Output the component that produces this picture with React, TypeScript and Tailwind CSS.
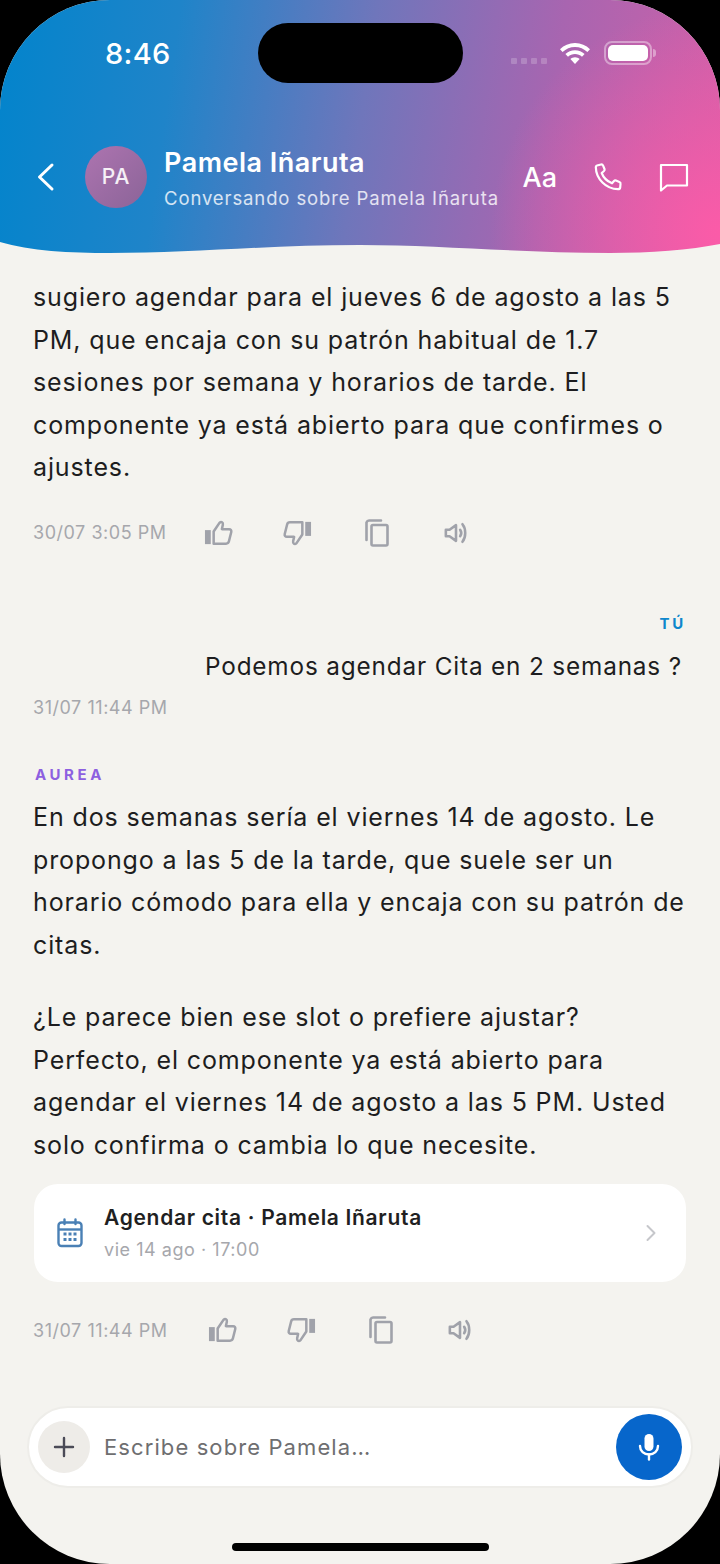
const iconColor = '#a0a2aa';

function ThumbUp() {
  return (
    <svg width="29" height="28" viewBox="0 0 30 28" fill="none" stroke={iconColor} strokeWidth="2.6" strokeLinejoin="round">
      <rect x="1" y="11" width="6" height="14.5" fill={iconColor} stroke="none" />
      <path d="M10 25V12.5L16 3.5C18 1.5 20 3 19.5 5.5L18.5 10H26C27.6 10 28.6 11.4 28.2 13L25.8 22.6C25.4 24.2 24.3 25 22.8 25Z" />
    </svg>
  );
}

function ThumbDown() {
  return (
    <svg width="29" height="28" viewBox="0 0 30 28" fill="none" stroke={iconColor} strokeWidth="2.6" strokeLinejoin="round" className="rotate-180">
      <rect x="1" y="11" width="6" height="14.5" fill={iconColor} stroke="none" />
      <path d="M10 25V12.5L16 3.5C18 1.5 20 3 19.5 5.5L18.5 10H26C27.6 10 28.6 11.4 28.2 13L25.8 22.6C25.4 24.2 24.3 25 22.8 25Z" />
    </svg>
  );
}

function Copy() {
  return (
    <svg width="26" height="28" viewBox="0 0 26 28" fill="none" stroke={iconColor} strokeWidth="2.6" strokeLinejoin="round">
      <path d="M2.5 21V3.5C3 2.2 3.5 1.5 5 1.5H17" strokeLinecap="round" />
      <rect x="7.5" y="6" width="16" height="20.5" rx="1.5" />
    </svg>
  );
}

function Speaker() {
  return (
    <svg width="24" height="24" viewBox="0 0 26 26" fill="none" stroke={iconColor} strokeWidth="2.8" strokeLinecap="round" strokeLinejoin="round">
      <path d="M2 9.5H6L13 4.5V21.5L6 16.5H2Z" />
      <path d="M17.5 9.5C18.9 11.5 18.9 14.5 17.5 16.5" />
      <path d="M20 3.5C24 8.5 24 17.5 20 22.5" />
    </svg>
  );
}

function MessageActions({ time, gap }: { time: string; gap: string }) {
  return (
    <div className="flex items-center h-[30px]">
      <span className={`text-[18px] tracking-[0.03em] text-[#a6a7ac] ${gap}`}>{time}</span>
      <div className="w-[30px] flex justify-center"><ThumbUp /></div>
      <div className="w-[30px] flex justify-center ml-[49px]"><ThumbDown /></div>
      <div className="w-[30px] flex justify-center ml-[49px]"><Copy /></div>
      <div className="w-[30px] flex justify-center ml-[49px]"><Speaker /></div>
    </div>
  );
}

function Paragraph({ children }: { children: React.ReactNode }) {
  return <p className="text-[25px] leading-[42.5px] tracking-[0.035em] text-[#1d1d20]">{children}</p>;
}

export default function App() {
  return (
    <div className="w-[720px] h-[1564px] bg-black font-['Inter',sans-serif]">
      <div className="relative w-full h-full rounded-[110px] overflow-hidden bg-[#f4f3ef] flex flex-col">
        {/* Header */}
        <header className="relative shrink-0 h-[253px] bg-[radial-gradient(circle_at_100%_92%,#fb5ba8_0px,rgba(251,91,168,0)_230px),linear-gradient(98deg,#0284cc_0%,#1f84c9_24%,#6f76bb_50%,#a865b0_75%,#d060a8_100%)] text-white">
          <div className="absolute left-[258px] top-[23px] w-[205px] h-[60px] rounded-full bg-black" />

          <div className="flex items-center h-[106px] pl-[105px] pr-[64px] justify-between">
            <span className="text-[29px] font-medium leading-none tracking-[0.01em]">8:46</span>
            <div className="flex items-center">
              <div className="flex gap-[4px] mr-[12px] mt-[15px]">
                <span className="w-[6px] h-[6px] rounded-[1px] bg-white/20" />
                <span className="w-[6px] h-[6px] rounded-[1px] bg-white/20" />
                <span className="w-[6px] h-[6px] rounded-[1px] bg-white/20" />
                <span className="w-[6px] h-[6px] rounded-[1px] bg-white/20" />
              </div>
              <svg width="32" height="24" viewBox="0 0 32 24" fill="white" className="mr-[13px]">
                <path d="M16 2C10 2 5 4.3 1 8.2L3.6 11C7 7.8 11.2 5.9 16 5.9S25 7.8 28.4 11L31 8.2C27 4.3 22 2 16 2Z" />
                <path d="M16 9.2C12.2 9.2 9 10.6 6.4 13L9 15.8C11 14 13.4 13 16 13S21 14 23 15.8L25.6 13C23 10.6 19.8 9.2 16 9.2Z" />
                <path d="M16 16.2C14.2 16.2 12.6 16.9 11.4 18L16 23L20.6 18C19.4 16.9 17.8 16.2 16 16.2Z" />
              </svg>
              <div className="flex items-center">
                <div className="w-[48px] h-[24px] rounded-[8px] border-2 border-white/40 p-[2px]">
                  <div className="w-full h-full rounded-[5px] bg-white" />
                </div>
                <div className="w-[3px] h-[8px] ml-[1px] rounded-r-full bg-white/40" />
              </div>
            </div>
          </div>

          <div className="flex items-center h-[62px] mt-[40px] pl-[36px] pr-[31px]">
            <svg width="20" height="30" viewBox="0 0 20 30" fill="none" stroke="white" strokeWidth="3" strokeLinecap="round" strokeLinejoin="round">
              <path d="M16 3L3.5 15L16 27" />
            </svg>
            <div className="w-[62px] h-[62px] ml-[29px] rounded-full bg-[linear-gradient(135deg,#ad74b0,#8b6498)] flex items-center justify-center text-[21px] font-medium tracking-[0.04em] text-white/90">PA</div>
            <div className="ml-[17px] flex-1 pt-[3px]">
              <div className="text-[27px] leading-[32px] font-semibold tracking-[0.018em]">Pamela Iñaruta</div>
              <div className="text-[18.5px] leading-[26px] tracking-[0.048em] text-white/80 mt-[6px]">Conversando sobre Pamela Iñaruta</div>
            </div>
            <span className="text-[27px] font-medium leading-none">Aa</span>
            <svg width="30" height="30" viewBox="0 0 30 30" fill="none" stroke="white" strokeWidth="2.2" strokeLinecap="round" strokeLinejoin="round" className="ml-[36px]">
              <path d="M4 3.5L8 2.5C9 2.3 9.7 2.7 10.1 3.6L11.5 7C11.8 7.8 11.6 8.5 11 9L8.7 11C10.3 15.3 14.4 19.4 19 21.3L21 19C21.5 18.4 22.3 18.2 23 18.5L26.4 19.9C27.3 20.3 27.7 21 27.5 22L27.2 25.5C27 26.7 26.2 27.2 25 27.2C13 27 3 17 2.8 5C2.8 4.2 3.2 3.7 4 3.5Z" />
            </svg>
            <svg width="30" height="30" viewBox="0 0 30 30" fill="none" stroke="white" strokeWidth="2.2" strokeLinejoin="round" className="ml-[36px]">
              <path d="M2 3H28V23.5H8L2 28.5Z" />
            </svg>
          </div>

          {/* Wave edge */}
          <svg width="720" height="30" viewBox="0 0 720 30" className="absolute left-0 bottom-0">
            <path d="M0 19C30 28 70 30 110 30C190 30 270 22 360 22C440 22 520 30 610 30C650 30 690 27 720 21V30H0Z" fill="#f4f3ef" />
          </svg>
        </header>

        {/* Messages */}
        <main className="flex-1 px-[33px] pt-[23px]">
          <Paragraph>
            sugiero agendar para el jueves 6 de agosto a las 5 PM, que encaja con su patrón habitual de 1.7 sesiones por semana y horarios de tarde. El componente ya está abierto para que confirmes o ajustes.
          </Paragraph>
          <div className="mt-[29px]">
            <MessageActions time="30/07 3:05 PM" gap="mr-[37px]" />
          </div>

          <div className="mt-[66px] text-right pr-[1px] text-[15px] leading-[20px] font-bold tracking-[0.18em] text-[#0e87cc]">TÚ</div>
          <div className="mt-[11px] text-right pr-[5px] text-[24.3px] leading-[42.5px] tracking-[0.035em] text-[#1d1d20]">
            Podemos agendar Cita en 2 semanas ?
          </div>
          <div className="mt-[8px] text-[18px] leading-[26px] tracking-[0.03em] text-[#a6a7ac]">31/07 11:44 PM</div>

          <div className="mt-[44px] pl-[2px] text-[15px] leading-[20px] font-bold tracking-[0.24em] text-[#8d5fe0]">AUREA</div>
          <div className="mt-[11px]">
            <Paragraph>
              En dos semanas sería el viernes 14 de agosto. Le propongo a las 5 de la tarde, que suele ser un horario cómodo para ella y encaja con su patrón de citas.
            </Paragraph>
          </div>
          <div className="mt-[30px]">
            <Paragraph>
              ¿Le parece bien ese slot o prefiere ajustar? Perfecto, el componente ya está abierto para agendar el viernes 14 de agosto a las 5 PM. Usted solo confirma o cambia lo que necesite.
            </Paragraph>
          </div>

          <div className="mt-[18px] h-[98px] mr-[1px] ml-[1px] rounded-[24px] bg-white flex items-center pl-[23px] pr-[29px]">
            <svg width="26" height="30" viewBox="0 0 26 30" fill="none" stroke="#4a80b5" strokeWidth="2.4">
              <rect x="1.5" y="4.5" width="23" height="23.5" rx="3" />
              <path d="M1.5 11.5H24.5" />
              <path d="M7.5 1.5V6M18.5 1.5V6" strokeLinecap="round" />
              <g fill="#4a80b5" stroke="none">
                <rect x="6.5" y="14.5" width="3" height="3" />
                <rect x="11.5" y="14.5" width="3" height="3" />
                <rect x="16.5" y="14.5" width="3" height="3" />
                <rect x="6.5" y="20" width="3" height="3" />
                <rect x="11.5" y="20" width="3" height="3" />
                <rect x="16.5" y="20" width="3" height="3" />
              </g>
            </svg>
            <div className="ml-[21px] flex-1">
              <div className="text-[21px] leading-[28px] font-semibold tracking-[0.033em] text-[#1f1f22]">Agendar cita · Pamela Iñaruta</div>
              <div className="mt-[6px] text-[18px] leading-[24px] tracking-[0.03em] text-[#a6a7ac]">vie 14 ago · 17:00</div>
            </div>
            <svg width="12" height="18" viewBox="0 0 12 18" fill="none" stroke="#c6c7cb" strokeWidth="2" strokeLinecap="round" strokeLinejoin="round">
              <path d="M2.5 2L9.5 9L2.5 16" />
            </svg>
          </div>

          <div className="mt-[33px]">
            <MessageActions time="31/07 11:44 PM" gap="mr-[40px]" />
          </div>
        </main>

        {/* Composer */}
        <div className="absolute left-[27px] right-[27px] top-[1406px] h-[82px] rounded-full bg-white border-2 border-[#eeede9] flex items-center pl-[9px] pr-[9px]">
          <div className="w-[52px] h-[52px] rounded-full bg-[#eeece8] flex items-center justify-center">
            <svg width="22" height="22" viewBox="0 0 22 22" stroke="#4b4b57" strokeWidth="2.4" strokeLinecap="round">
              <path d="M11 2V20M2 11H20" />
            </svg>
          </div>
          <span className="ml-[14px] flex-1 text-[22px] tracking-[0.05em] text-[#6e6e70]">Escribe sobre Pamela…</span>
          <div className="w-[66px] h-[66px] rounded-full bg-[#0766cb] flex items-center justify-center">
            <svg width="22" height="28" viewBox="0 0 22 28" fill="none" stroke="white" strokeWidth="2.4" strokeLinecap="round">
              <rect x="6.5" y="1" width="9" height="17" rx="4.5" fill="white" stroke="none" />
              <path d="M2 13C2 18 6 21.5 11 21.5S20 18 20 13" />
              <path d="M11 21.5V26.5" />
            </svg>
          </div>
        </div>

        <div className="absolute left-[232px] top-[1543px] w-[257px] h-[8px] rounded-full bg-black" />
      </div>
    </div>
  );
}
